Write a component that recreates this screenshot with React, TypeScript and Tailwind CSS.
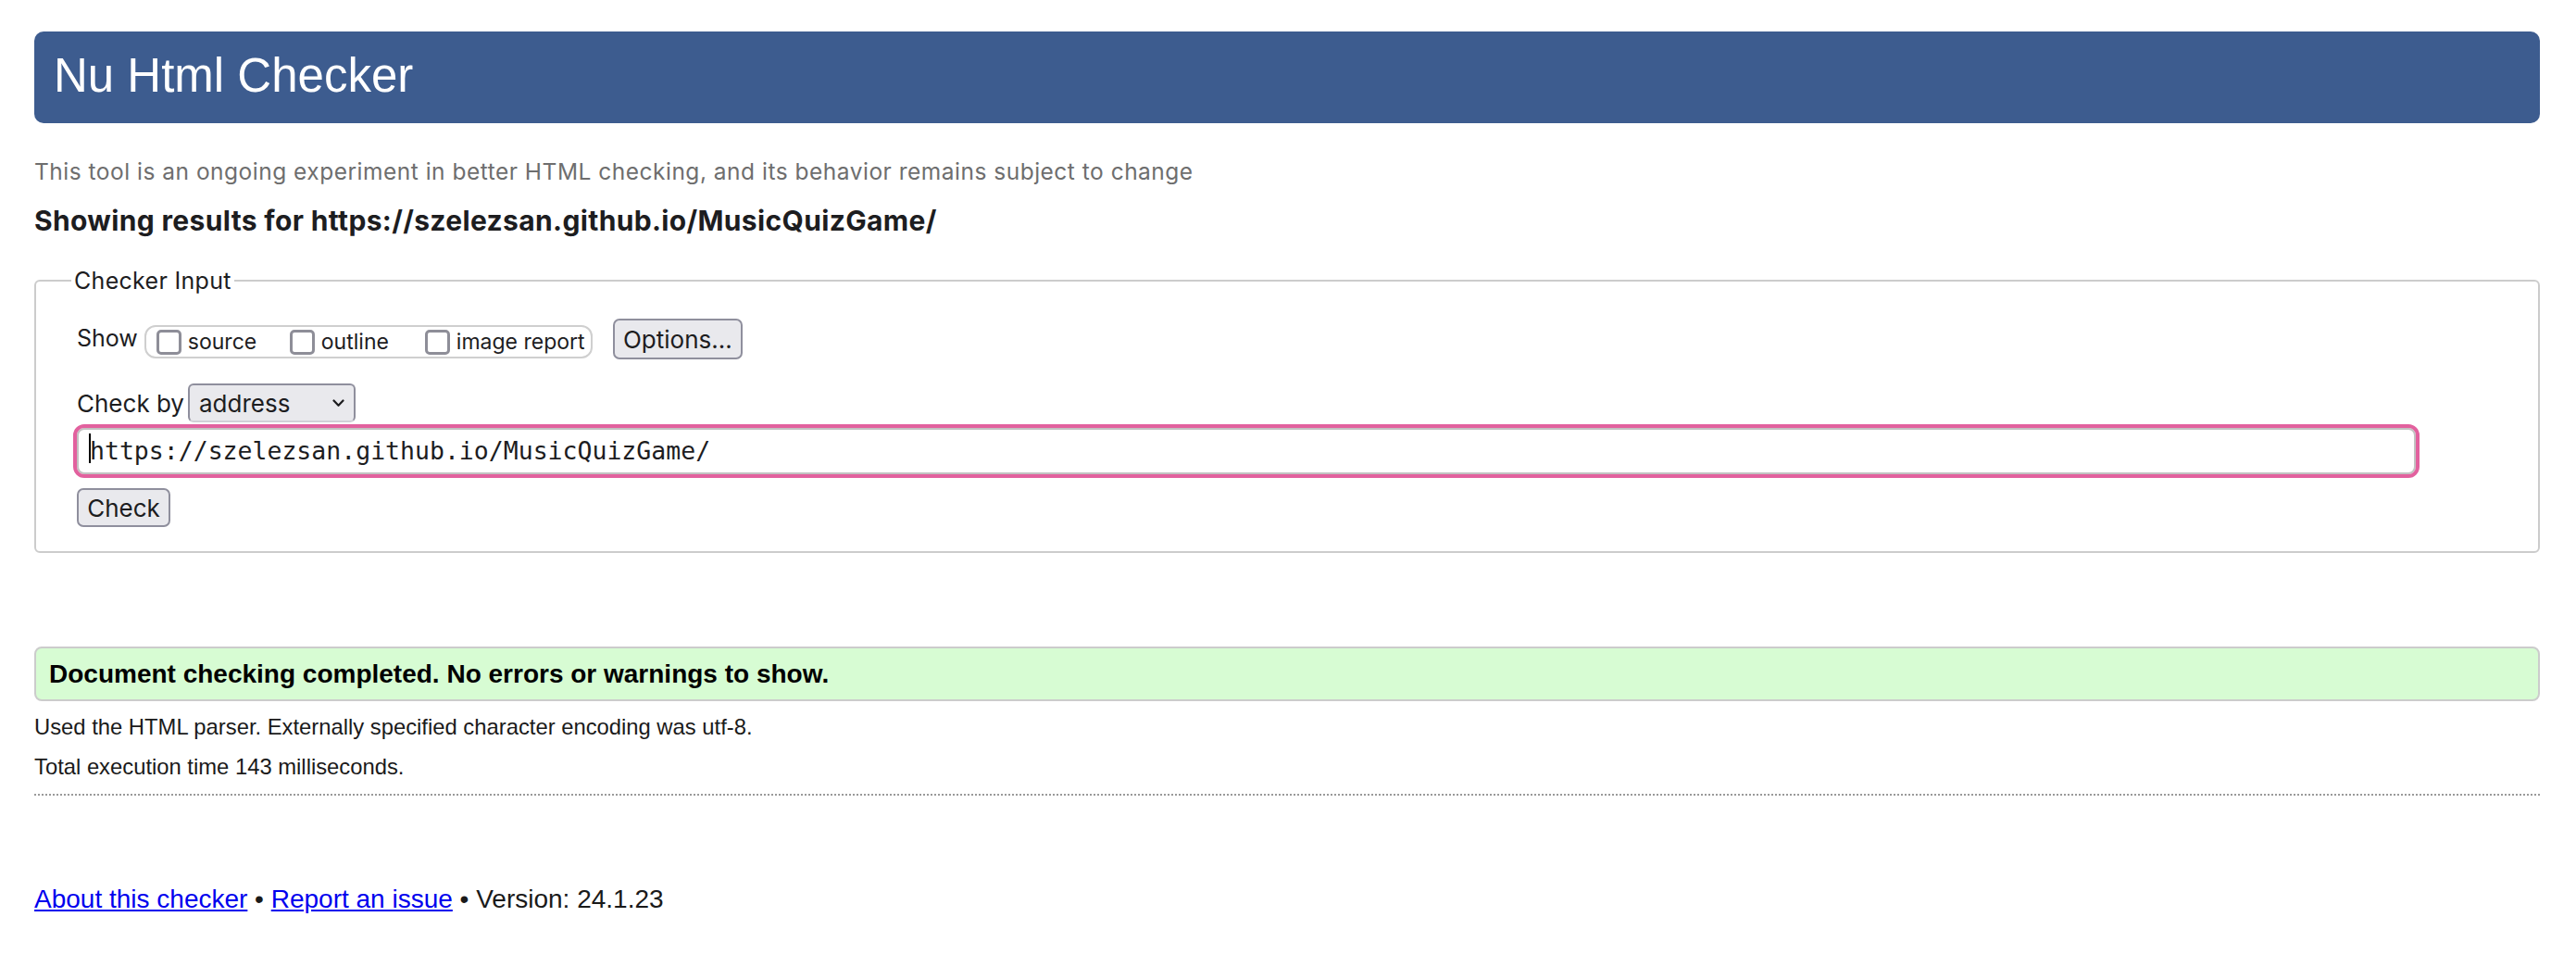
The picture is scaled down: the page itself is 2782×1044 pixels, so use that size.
export default function App() {
  return (
    <div className="min-h-screen bg-white pl-[37px] pr-[39px] pt-[34px] pb-10 font-['Inter',sans-serif] text-[#1d1d1f]">
      {/* Banner */}
      <h1 className="h-[99px] rounded-[10px] bg-[#3d5c8f] pl-[21px] pt-[22px] font-['Liberation_Sans',Arial,sans-serif] text-[51px] leading-[51px] font-normal text-white">
        Nu Html Checker
      </h1>

      <p className="mt-[37px] text-[24.5px] leading-[30px] tracking-[0.5px] text-[#6e6e6e]">
        This tool is an ongoing experiment in better HTML checking, and its behavior remains subject to change
      </p>
      <h2 className="mt-[21px] text-[30px] leading-[34px] tracking-[0.35px] font-bold text-[#1d1d1f]">
        Showing results for https://szelezsan.github.io/MusicQuizGame/
      </h2>

      {/* Checker input */}
      <fieldset className="mt-[33px] rounded-[6px] border-2 border-[#cccccc] pl-[44px] pt-[26px] pb-[26px]">
        <legend className="-ml-[6px] px-[3px] text-[25px] leading-[30px] tracking-[0.3px]">Checker Input</legend>

        <div className="flex h-[44px] items-center">
          <span className="text-[25px]">Show</span>
          <div className="ml-[7px] mt-[6px] flex h-[36px] items-center rounded-[12px] border-2 border-[#cfcfcf] pl-[11px] pr-[14px]">
            <span className="h-[27px] w-[27px] rounded-[5px] border-[3px] border-[#8e8e98] bg-white" />
            <span className="ml-[7px] w-[110px] text-[23px]">source</span>
            <span className="h-[27px] w-[27px] rounded-[5px] border-[3px] border-[#8e8e98] bg-white" />
            <span className="ml-[7px] w-[112px] text-[23px]">outline</span>
            <span className="h-[27px] w-[27px] rounded-[5px] border-[3px] border-[#8e8e98] bg-white" />
            <span className="ml-[7px] w-[131px] whitespace-nowrap text-[23px]">image report</span>
          </div>
          <button className="ml-[22px] flex h-[44px] w-[140px] items-center justify-center rounded-[7px] border-2 border-[#8f8f9d] bg-[#e9e9ed] text-[26px]">
            Options...
          </button>
        </div>

        <div className="mt-[26px] flex h-[42px] items-center">
          <span className="text-[26px]">Check by</span>
          <div className="ml-[4px] flex h-[42px] w-[181px] items-center justify-between rounded-[6px] border-2 border-b-[#d0d0d6] border-[#8f8f9d] bg-[#e9e9ed] pl-[10px] pr-[10px] text-[26px]">
            <span>address</span>
            <svg width="13" height="9" viewBox="0 0 13 9" fill="none">
              <path d="M1.5 1.5 L6.5 6.8 L11.5 1.5" stroke="#1d1d1f" strokeWidth="2.2" strokeLinecap="round" strokeLinejoin="round" />
            </svg>
          </div>
        </div>

        <div className="mt-[6px] flex h-[50px] w-[2526px] items-center rounded-[8px] border-2 border-[#c2c2c2] pl-[12px] font-['DejaVu_Sans_Mono',monospace] text-[26.5px] outline-4 outline-[#e2619e]">
          <span className="relative">
            <span className="absolute left-[-1px] top-[1px] h-[32px] w-[2px] bg-black" />
            https://szelezsan.github.io/MusicQuizGame/
          </span>
        </div>

        <button className="mt-[15px] flex h-[42px] w-[101px] items-center justify-center rounded-[7px] border-2 border-[#8f8f9d] bg-[#e9e9ed] text-[26px]">
          Check
        </button>
      </fieldset>

      {/* Result */}
      <div className="mt-[101px] flex h-[59px] items-center rounded-[8px] border-2 border-[#cccccc] bg-[#d7fcd3] pl-[14px] font-['Liberation_Sans',Arial,sans-serif] text-[28px] font-bold text-black">
        Document checking completed. No errors or warnings to show.
      </div>

      <div className="font-['Liberation_Sans',Arial,sans-serif] text-[23.8px] leading-[30px] text-[#1a1a1a]">
        <p className="mt-[13px]">Used the HTML parser. Externally specified character encoding was utf-8.</p>
        <p className="mt-[13px]">Total execution time 143 milliseconds.</p>
      </div>

      <div className="mt-[14px] border-t-2 border-dotted border-[#9a9a9a]" />

      <p className="mt-[95px] font-['Liberation_Sans',Arial,sans-serif] text-[28px] leading-[34px] text-[#1a1a1a]">
        <a href="#" className="text-[#0000ee] underline">About this checker</a>
        {" • "}
        <a href="#" className="text-[#0000ee] underline">Report an issue</a>
        {" • Version: 24.1.23"}
      </p>
    </div>
  )
}
